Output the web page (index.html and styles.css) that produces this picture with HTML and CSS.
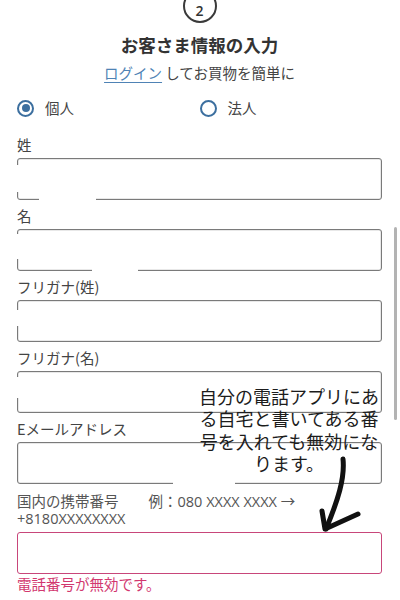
FILE: index.html
```html
<!DOCTYPE html>
<html lang="ja">
<head>
<meta charset="utf-8">
<title>お客さま情報の入力</title>
<link rel="stylesheet" href="styles.css">
</head>
<body>
<div class="page">
  <div class="step"><span>2</span></div>
  <h1 class="title">お客さま情報の入力</h1>
  <p class="sub"><a href="#" class="link">ログイン</a> してお買物を簡単に</p>

  <div class="radios">
    <label class="radio"><span class="dot on"></span>個人</label>
    <label class="radio second"><span class="dot"></span>法人</label>
  </div>

  <div class="field">
    <div class="label">姓</div>
    <div class="box">
      <span class="mask m1a"></span><span class="mask m1b"></span>
    </div>
  </div>
  <div class="field">
    <div class="label">名</div>
    <div class="box">
      <span class="mask m2a"></span><span class="mask m2b"></span>
    </div>
  </div>
  <div class="field">
    <div class="label">フリガナ(姓)</div>
    <div class="box"><span class="mask m3a"></span></div>
  </div>
  <div class="field">
    <div class="label">フリガナ(名)</div>
    <div class="box"><span class="mask m4a"></span></div>
  </div>
  <div class="field email">
    <div class="label">Eメールアドレス</div>
    <div class="box"><span class="mask m5b"></span></div>
  </div>
  <div class="field phone">
    <div class="label small">国内の携帯番号<span class="ex">例：080 XXXX XXXX →</span><br>+8180XXXXXXXX</div>
    <div class="box error"></div>
    <div class="err">電話番号が無効です。</div>
  </div>

  <div class="note">自分の電話アプリにあ<br>る自宅と書いてある番<br>号を入れても無効にな<br>ります。</div>
  <svg class="arrow" width="400" height="600" viewBox="0 0 400 600">
    <path d="M343 459 C 345 478, 338 500, 326 529" fill="none" stroke="#111" stroke-width="5" stroke-linecap="round"/>
    <path d="M322 511 L325 529 L358 514" fill="none" stroke="#111" stroke-width="5" stroke-linecap="round" stroke-linejoin="round"/>
  </svg>
  <div class="scrollbar"></div>
</div>
</body>
</html>
```

FILE: styles.css
```css
html, body {
  margin: 0;
  padding: 0;
  background: #fff;
}
body {
  font-family: "Open Sans", "Noto Sans CJK JP", sans-serif;
  color: #444;
  width: 400px;
  height: 600px;
  overflow: hidden;
}
.page {
  position: relative;
  display: flow-root;
  padding: 0 18px 0 17px;
  width: 365px;
  height: 600px;
}
.step {
  width: 30px;
  height: 30px;
  border: 2px solid #3a3a3a;
  border-radius: 50%;
  margin: -11px auto 0;
  display: flex;
  align-items: flex-end;
  justify-content: center;
  box-sizing: content-box;
}
.step span {
  font-family: "Open Sans", sans-serif;
  font-weight: 600;
  font-size: 14px;
  line-height: 20px;
  color: #333;
}
.title {
  margin: 10px 0 0;
  text-align: center;
  font-family: "Noto Sans CJK JP", sans-serif;
  font-weight: 700;
  font-size: 17.5px;
  line-height: 24px;
  color: #333;
}
.sub {
  margin: 6px 0 0;
  text-align: center;
  font-family: "Noto Sans CJK JP", sans-serif;
  font-size: 14.5px;
  line-height: 20px;
  color: #444;
}
.link {
  color: #4f83b5;
  text-decoration: underline;
  text-underline-offset: 3px;
}
.radios {
  display: flex;
  margin-top: 15px;
  height: 20px;
  align-items: center;
}
.radio {
  display: flex;
  align-items: center;
  gap: 11px;
  font-family: "Noto Sans CJK JP", sans-serif;
  font-size: 14.5px;
  line-height: 20px;
  color: #444;
  width: 191px;
}
.dot {
  width: 13px;
  height: 13px;
  border: 2px solid #3c6f9f;
  border-radius: 50%;
  position: relative;
  box-sizing: content-box;
}
.dot.on::after {
  content: "";
  position: absolute;
  left: 2.5px;
  top: 2.5px;
  width: 8px;
  height: 8px;
  border-radius: 50%;
  background: #3c6f9f;
}
.field {
  margin-top: 17px;
}
.field + .field {
  margin-top: 6px;
}
.label {
  font-family: "Noto Sans CJK JP", sans-serif;
  font-size: 14.5px;
  line-height: 20px;
  color: #444;
  margin-bottom: 3px;
}
.label.small {
  font-family: "Open Sans", "Noto Sans CJK JP", sans-serif;
  font-size: 14.5px;
  line-height: 17px;
  color: #555;
  margin-bottom: 5px;
  white-space: nowrap;
}
.ex {
  margin-left: 30px;
}
.box {
  position: relative;
  height: 40px;
  border: 1px solid #7a7a7a;
  border-radius: 3px;
  background: #fff;
  box-shadow: inset 0 0 0 0.5px rgba(0, 0, 0, 0.18);
}
.box.error {
  border: 1px solid #c8467a;
  box-shadow: none;
}
.field.phone {
  margin-top: 9px;
}
.err {
  font-family: "Noto Sans CJK JP", sans-serif;
  font-size: 14.5px;
  line-height: 20px;
  color: #d2386f;
  margin-top: 0;
}
.mask {
  position: absolute;
  background: #fff;
}
.m1a { left: -3px; top: 6px; width: 6px; height: 27px; }
.m1b { left: 21px; top: 36px; width: 57px; height: 8px; }
.m2a { left: -3px; top: 4px; width: 6px; height: 25px; }
.m2b { left: 74px; top: 36px; width: 46px; height: 8px; }
.m3a { left: -3px; top: 9px; width: 6px; height: 16px; }
.m4a { left: -3px; top: 5px; width: 6px; height: 21px; }
.m5b { left: 155px; top: 37px; width: 62px; height: 8px; }
.note {
  position: absolute;
  left: 194px;
  top: 385px;
  width: 190px;
  text-align: center;
  font-family: "Noto Sans CJK JP", sans-serif;
  font-size: 18px;
  line-height: 22.4px;
  color: #1c1c1c;
}
.arrow {
  position: absolute;
  left: 0;
  top: 0;
  pointer-events: none;
}
.scrollbar {
  position: absolute;
  left: 394px;
  top: 227px;
  width: 2.5px;
  height: 193px;
  background: #b3b3b3;
  border-radius: 2px;
}
```
